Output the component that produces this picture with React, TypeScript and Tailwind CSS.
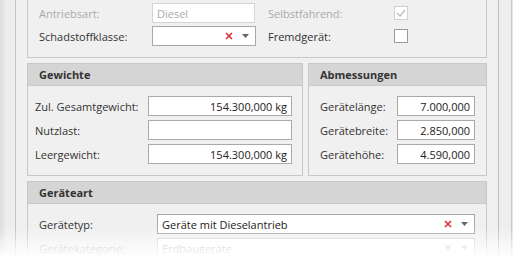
import React from "react";

const font = { fontFamily: '"Open Sans", "Noto Sans", sans-serif' };

function Combo({ value, disabled, className }: { value?: string; disabled?: boolean; className: string }) {
  return (
    <div
      className={`flex h-[20px] items-center border bg-white pl-[4px] pr-[6px] ${
        disabled ? "border-[#d4d4d4] text-[#aaaaaa]" : "border-[#a9a9a9] text-[#222]"
      } ${className}`}
    >
      <span className="flex-1 truncate">{value}</span>
      <svg width="8" height="8" viewBox="0 0 8 8" className="mr-[9px]">
        <path
          d="M1 1 L7 7 M7 1 L1 7"
          stroke={disabled ? "#f0b8bd" : "#d9303e"}
          strokeWidth="1.6"
        />
      </svg>
      <svg width="7" height="4" viewBox="0 0 7 4">
        <path d="M0 0 H7 L3.5 4 Z" fill={disabled ? "#c8c8c8" : "#666"} />
      </svg>
    </div>
  );
}

function Field({ value, className }: { value?: string; className: string }) {
  return (
    <div className={`flex h-[20px] items-center justify-end border border-[#a9a9a9] bg-white px-[4px] text-[#222] ${className}`}>
      {value}
    </div>
  );
}

function Header({ title }: { title: string }) {
  return (
    <div className="flex h-[22px] shrink-0 items-center border-b border-[#c8c8c8] bg-[#d5d5d5] pl-[11px] font-bold text-[#333]">
      {title}
    </div>
  );
}

export default function App() {
  return (
    <div className="relative flex h-[258px] w-[513px] overflow-hidden bg-[#f0f0f0] text-[11px] leading-none text-[#333]" style={font}>
      {/* left chrome */}
      <div className="flex w-[27px] shrink-0">
        <div className="w-[6px] bg-gradient-to-r from-[#dcdcdc] to-[#ececec]" />
        <div className="w-[9px] bg-[#eeeeee]" />
        <div className="w-px bg-[#c4c4c4]" />
        <div className="flex-1 bg-[#f0f0f0]" />
      </div>

      {/* content */}
      <div className="flex w-[460px] shrink-0 flex-col">
        {/* top panel */}
        <div className="flex h-[58px] shrink-0 flex-col border-x border-b border-[#c8c8c8] pt-[3px]">
          <div className="flex h-[20px] items-center">
            <span className="w-[124px] pl-[11px] text-[#aaaaaa]">Antriebsart:</span>
            <div className="flex h-[20px] w-[103px] items-center border border-[#d4d4d4] bg-white pl-[4px] text-[#aaaaaa]">Diesel</div>
            <span className="ml-[13px] w-[126px] text-[#aaaaaa]">Selbstfahrend:</span>
            <div className="flex h-[14px] w-[14px] items-center justify-center border border-[#d0d0d0] bg-white">
              <svg width="10" height="8" viewBox="0 0 10 8">
                <path d="M1 4 L4 7 L9 1" fill="none" stroke="#b8b8b8" strokeWidth="1.2" />
              </svg>
            </div>
          </div>
          <div className="mt-[3px] flex h-[20px] items-center">
            <span className="w-[124px] pl-[11px]">Schadstoffklasse:</span>
            <Combo className="w-[104px]" />
            <span className="ml-[12px] w-[126px]">Fremdgerät:</span>
            <div className="h-[14px] w-[14px] border border-[#9a9a9a] bg-white" />
          </div>
        </div>

        <div className="mt-[5px] flex shrink-0 gap-[5px]">
          {/* Gewichte */}
          <div className="flex h-[113px] w-[276px] flex-col border border-[#c8c8c8]">
            <Header title="Gewichte" />
            <div className="flex flex-col gap-[4px] pt-[10px] pl-[7px]">
              <div className="flex items-center">
                <span className="w-[113px]">Zul. Gesamtgewicht:</span>
                <Field className="w-[144px]" value="154.300,000 kg" />
              </div>
              <div className="flex items-center">
                <span className="w-[113px]">Nutzlast:</span>
                <Field className="w-[144px]" />
              </div>
              <div className="flex items-center">
                <span className="w-[113px]">Leergewicht:</span>
                <Field className="w-[144px]" value="154.300,000 kg" />
              </div>
            </div>
          </div>

          {/* Abmessungen */}
          <div className="flex h-[113px] w-[179px] flex-col border border-[#c8c8c8]">
            <Header title="Abmessungen" />
            <div className="flex flex-col gap-[4px] pt-[10px] pl-[11px]">
              <div className="flex items-center">
                <span className="w-[77px]">Gerätelänge:</span>
                <Field className="w-[78px]" value="7.000,000" />
              </div>
              <div className="flex items-center">
                <span className="w-[77px]">Gerätebreite:</span>
                <Field className="w-[78px]" value="2.850,000" />
              </div>
              <div className="flex items-center">
                <span className="w-[77px]">Gerätehöhe:</span>
                <Field className="w-[78px]" value="4.590,000" />
              </div>
            </div>
          </div>
        </div>

        {/* Geräteart */}
        <div className="mt-[5px] flex h-[90px] shrink-0 flex-col border border-[#c8c8c8]">
          <Header title="Geräteart" />
          <div className="flex flex-col gap-[4px] pt-[10px] pl-[11px]">
            <div className="flex items-center">
              <span className="w-[118px]">Gerätetyp:</span>
              <Combo className="w-[318px]" value="Geräte mit Dieselantrieb" />
            </div>
            <div className="flex items-center">
              <span className="w-[118px] text-[#aaaaaa]">Gerätekategorie:</span>
              <Combo className="w-[318px]" value="Erdbaugeräte" disabled />
            </div>
          </div>
        </div>
      </div>

      {/* right chrome */}
      <div className="flex flex-1">
        <div className="w-[11px] bg-[#f0f0f0]" />
        <div className="w-px bg-[#bdbdbd]" />
        <div className="w-[12px] bg-[#eeeeee]" />
        <div className="w-px bg-[#c8c8c8]" />
        <div className="flex-1 bg-[#e4e4e4]" />
      </div>

      {/* bottom fade */}
      <div className="pointer-events-none absolute inset-x-0 bottom-0 h-[30px] bg-gradient-to-b from-transparent to-white" />
    </div>
  );
}
